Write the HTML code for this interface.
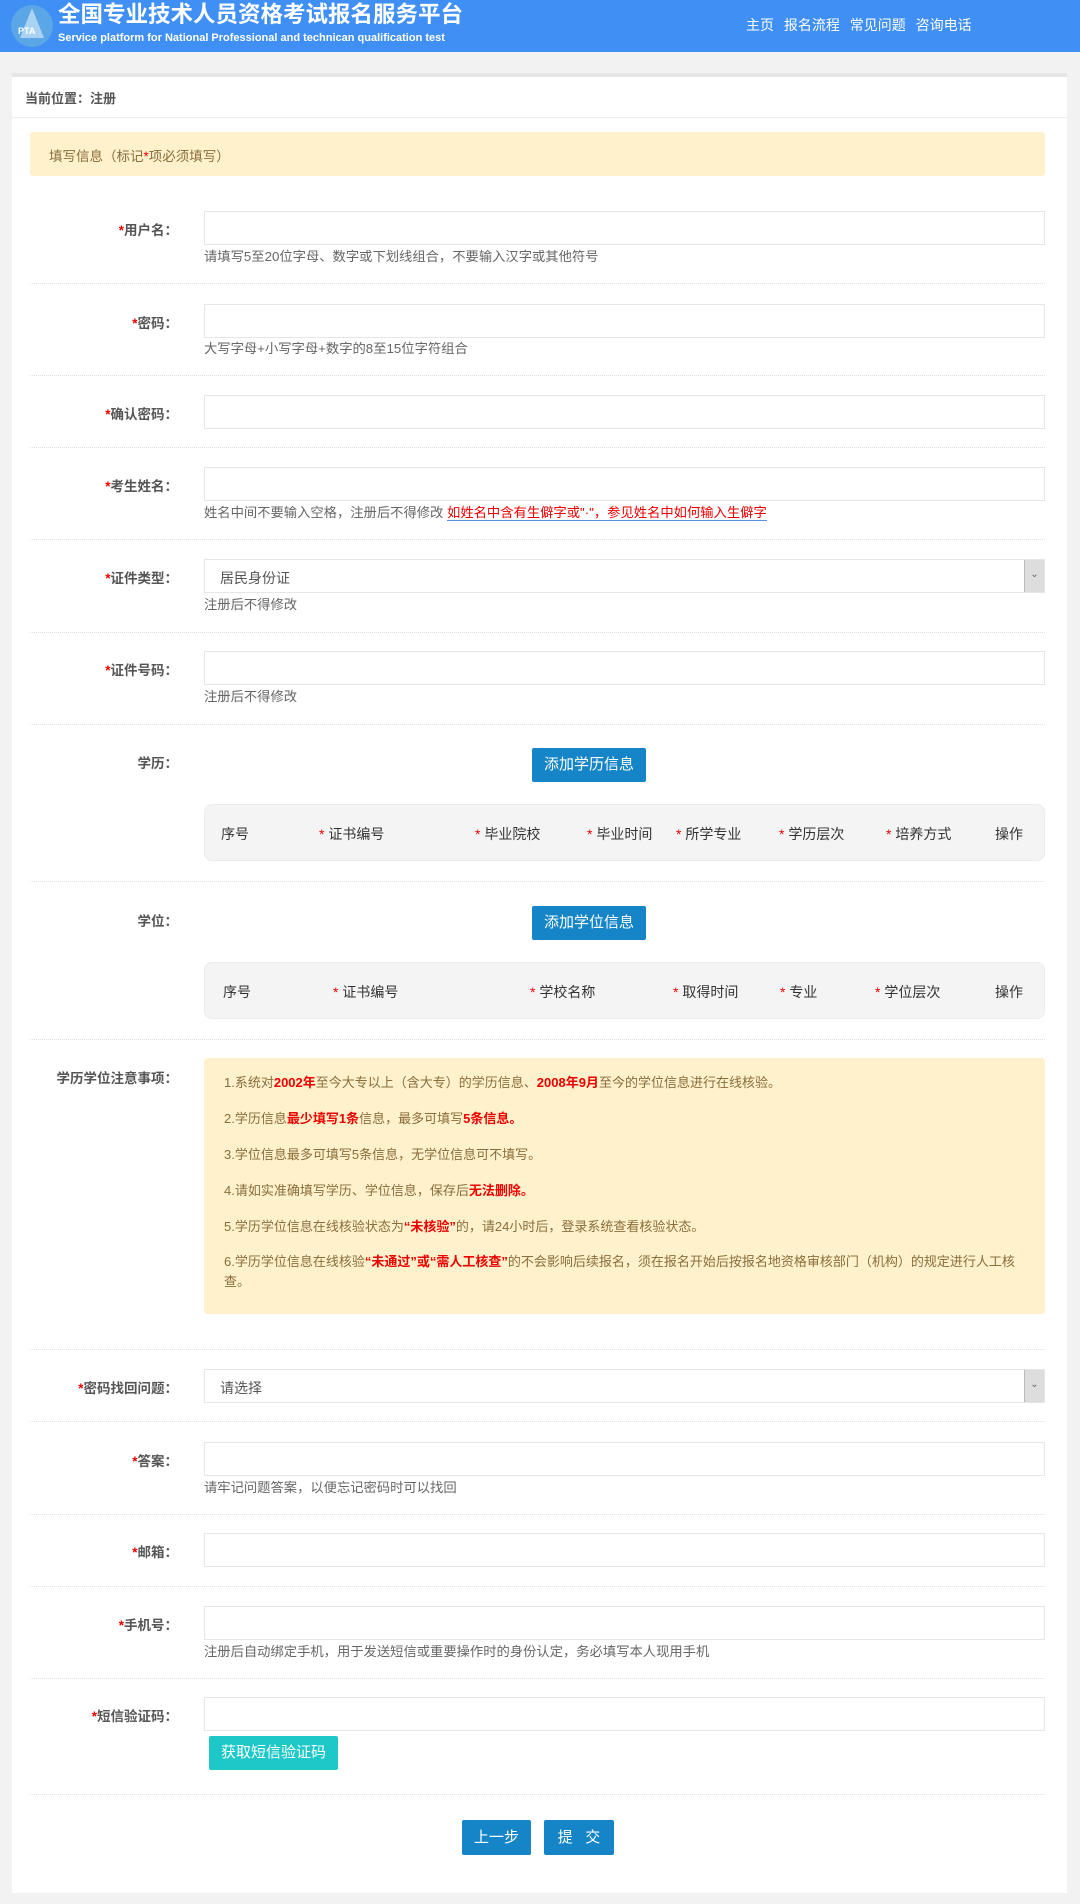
<!DOCTYPE html>
<html><head><meta charset="utf-8"><style>
*{margin:0;padding:0;box-sizing:border-box}
body{width:1080px;height:1904px;background:#f2f2f2;font-family:"Liberation Sans","Noto Sans CJK SC",sans-serif;position:relative;overflow:hidden;color:#555}
.hd{position:absolute;left:0;top:0;width:1080px;height:52px;background:#3f8ff5}
.t1{position:absolute;left:58px;top:1px;font-size:22.5px;font-weight:bold;color:#fff;line-height:28px}
.t2{position:absolute;left:58px;top:32px;font-size:11px;font-weight:bold;color:#fff}
.nav{position:absolute;left:746px;top:15px;font-size:14px;color:#fff;word-spacing:6px}
.card{position:absolute;left:12px;top:73px;width:1055px;height:1820px;background:#fff;border-top:4px solid #e6e6e6}
.a{position:absolute}
.lbl{position:absolute;right:902px;font-size:13.5px;font-weight:bold;color:#555;text-align:right;white-space:nowrap}
.lbl i{color:#e00;font-style:normal}
.in{position:absolute;left:204px;width:841px;height:34px;border:1px solid #e6e6e6;background:#fff}
.hint{position:absolute;left:204px;font-size:13.3px;color:#666}
.sep{position:absolute;left:30px;width:1015px;border-top:1px dotted #e0e0e0}
.btn{position:absolute;background:#1685c8;color:#fff;font-size:15px;text-align:center;border-radius:2px}
.tb{position:absolute;left:204px;width:841px;height:57px;background:#f4f4f4;border:1px solid #ececec;border-radius:8px;font-size:14px;color:#333}
.tb span{position:absolute;top:19px;white-space:nowrap}
.tb b{color:#e00;font-weight:normal}
.sel{position:absolute;right:0;top:0;width:20px;height:32px;background:#ddd;border-left:1px solid #bbb;font-size:10px;text-align:center;line-height:30px;color:#666}
.note{position:absolute;left:204px;top:1058px;width:841px;height:256px;background:#fef1cc;border-radius:4px;font-size:13px;color:#8a6d3b;padding:14px 20px}
.note p{height:36px}
.note em{color:#e00;font-weight:bold;font-style:normal}
</style></head><body>
<div class="hd">
<svg class="a" style="left:10px;top:4px" width="44" height="44"><circle cx="22" cy="22" r="21" fill="#5ba6e6"/><path d="M22 4 L10 34 L34 34 Z" fill="#cfe6f8" opacity=".7"/><text x="8" y="30" font-size="9" font-weight="bold" fill="#fff" font-family="Liberation Sans">PTA</text></svg>
<div class="t1">全国专业技术人员资格考试报名服务平台</div>
<div class="t2">Service platform for National Professional and technican qualification test</div>
<div class="nav">主页 报名流程 常见问题 咨询电话</div>
</div>
<div class="card"></div>
<div class="a" style="left:25px;top:88px;font-size:13px;font-weight:bold;color:#555">当前位置：注册</div>
<div class="a" style="left:12px;top:117px;width:1055px;border-top:1px solid #eee"></div>
<div class="a" style="left:30px;top:132px;width:1015px;height:44px;background:#fef1cc;border-radius:3px;font-size:13.5px;color:#8a6d3b;padding:13px 19px">填写信息（标记<span style="color:#e00">*</span>项必须填写）</div>

<div class="lbl" style="top:219px"><i>*</i>用户名：</div><div class="in" style="top:211px"></div><div class="hint" style="top:246px">请填写5至20位字母、数字或下划线组合，不要输入汉字或其他符号</div><div class="sep" style="top:283px"></div>
<div class="lbl" style="top:312px"><i>*</i>密码：</div><div class="in" style="top:304px"></div><div class="hint" style="top:338px">大写字母+小写字母+数字的8至15位字符组合</div><div class="sep" style="top:375px"></div>
<div class="lbl" style="top:403px"><i>*</i>确认密码：</div><div class="in" style="top:395px"></div><div class="sep" style="top:447px"></div>
<div class="lbl" style="top:475px"><i>*</i>考生姓名：</div><div class="in" style="top:467px"></div><div class="hint" style="top:502px">姓名中间不要输入空格，注册后不得修改 <span style="color:#e00;border-bottom:1px solid #5b8fe0">如姓名中含有生僻字或"·"，参见姓名中如何输入生僻字</span></div><div class="sep" style="top:539px"></div>
<div class="lbl" style="top:567px"><i>*</i>证件类型：</div><div class="in" style="top:559px;padding:8px 15px;font-size:14px;color:#555">居民身份证<div class="sel">⌄</div></div><div class="hint" style="top:594px">注册后不得修改</div><div class="sep" style="top:632px"></div>
<div class="lbl" style="top:659px"><i>*</i>证件号码：</div><div class="in" style="top:651px"></div><div class="hint" style="top:686px">注册后不得修改</div><div class="sep" style="top:724px"></div>

<div class="lbl" style="top:752px">学历：</div>
<div class="btn" style="left:532px;top:748px;width:114px;height:34px;line-height:34px">添加学历信息</div>
<div class="tb" style="top:804px"><span style="left:16px">序号</span><span style="left:114px"><b>* </b>证书编号</span><span style="left:270px"><b>* </b>毕业院校</span><span style="left:382px"><b>* </b>毕业时间</span><span style="left:471px"><b>* </b>所学专业</span><span style="left:574px"><b>* </b>学历层次</span><span style="left:681px"><b>* </b>培养方式</span><span style="left:790px">操作</span></div>
<div class="sep" style="top:881px"></div>
<div class="lbl" style="top:910px">学位：</div>
<div class="btn" style="left:532px;top:906px;width:114px;height:34px;line-height:34px">添加学位信息</div>
<div class="tb" style="top:962px"><span style="left:18px">序号</span><span style="left:128px"><b>* </b>证书编号</span><span style="left:325px"><b>* </b>学校名称</span><span style="left:468px"><b>* </b>取得时间</span><span style="left:575px"><b>* </b>专业</span><span style="left:670px"><b>* </b>学位层次</span><span style="left:790px">操作</span></div>
<div class="sep" style="top:1039px"></div>

<div class="lbl" style="top:1067px">学历学位注意事项：</div>
<div class="note">
<p>1.系统对<em>2002年</em>至今大专以上（含大专）的学历信息、<em>2008年9月</em>至今的学位信息进行在线核验。</p>
<p>2.学历信息<em>最少填写1条</em>信息，最多可填写<em>5条信息。</em></p>
<p>3.学位信息最多可填写5条信息，无学位信息可不填写。</p>
<p>4.请如实准确填写学历、学位信息，保存后<em>无法删除。</em></p>
<p>5.学历学位信息在线核验状态为<em>“未核验”</em>的，请24小时后，登录系统查看核验状态。</p>
<p style="line-height:20px">6.学历学位信息在线核验<em>“未通过”或“需人工核查”</em>的不会影响后续报名，须在报名开始后按报名地资格审核部门（机构）的规定进行人工核查。</p>
</div>
<div class="sep" style="top:1349px"></div>

<div class="lbl" style="top:1377px"><i>*</i>密码找回问题：</div><div class="in" style="top:1369px;padding:8px 15px;font-size:14px;color:#555">请选择<div class="sel">⌄</div></div><div class="sep" style="top:1421px"></div>
<div class="lbl" style="top:1450px"><i>*</i>答案：</div><div class="in" style="top:1442px"></div><div class="hint" style="top:1477px">请牢记问题答案，以便忘记密码时可以找回</div><div class="sep" style="top:1514px"></div>
<div class="lbl" style="top:1541px"><i>*</i>邮箱：</div><div class="in" style="top:1533px"></div><div class="sep" style="top:1586px"></div>
<div class="lbl" style="top:1614px"><i>*</i>手机号：</div><div class="in" style="top:1606px"></div><div class="hint" style="top:1641px">注册后自动绑定手机，用于发送短信或重要操作时的身份认定，务必填写本人现用手机</div><div class="sep" style="top:1678px"></div>
<div class="lbl" style="top:1705px"><i>*</i>短信验证码：</div><div class="in" style="top:1697px"></div>
<div class="btn" style="left:209px;top:1736px;width:129px;height:34px;line-height:34px;background:#1fc8c8">获取短信验证码</div>
<div class="sep" style="top:1794px"></div>
<div class="btn" style="left:462px;top:1820px;width:69px;height:35px;line-height:35px">上一步</div>
<div class="btn" style="left:544px;top:1820px;width:70px;height:35px;line-height:35px">提&nbsp;&nbsp;&nbsp;交</div>
</body></html>
